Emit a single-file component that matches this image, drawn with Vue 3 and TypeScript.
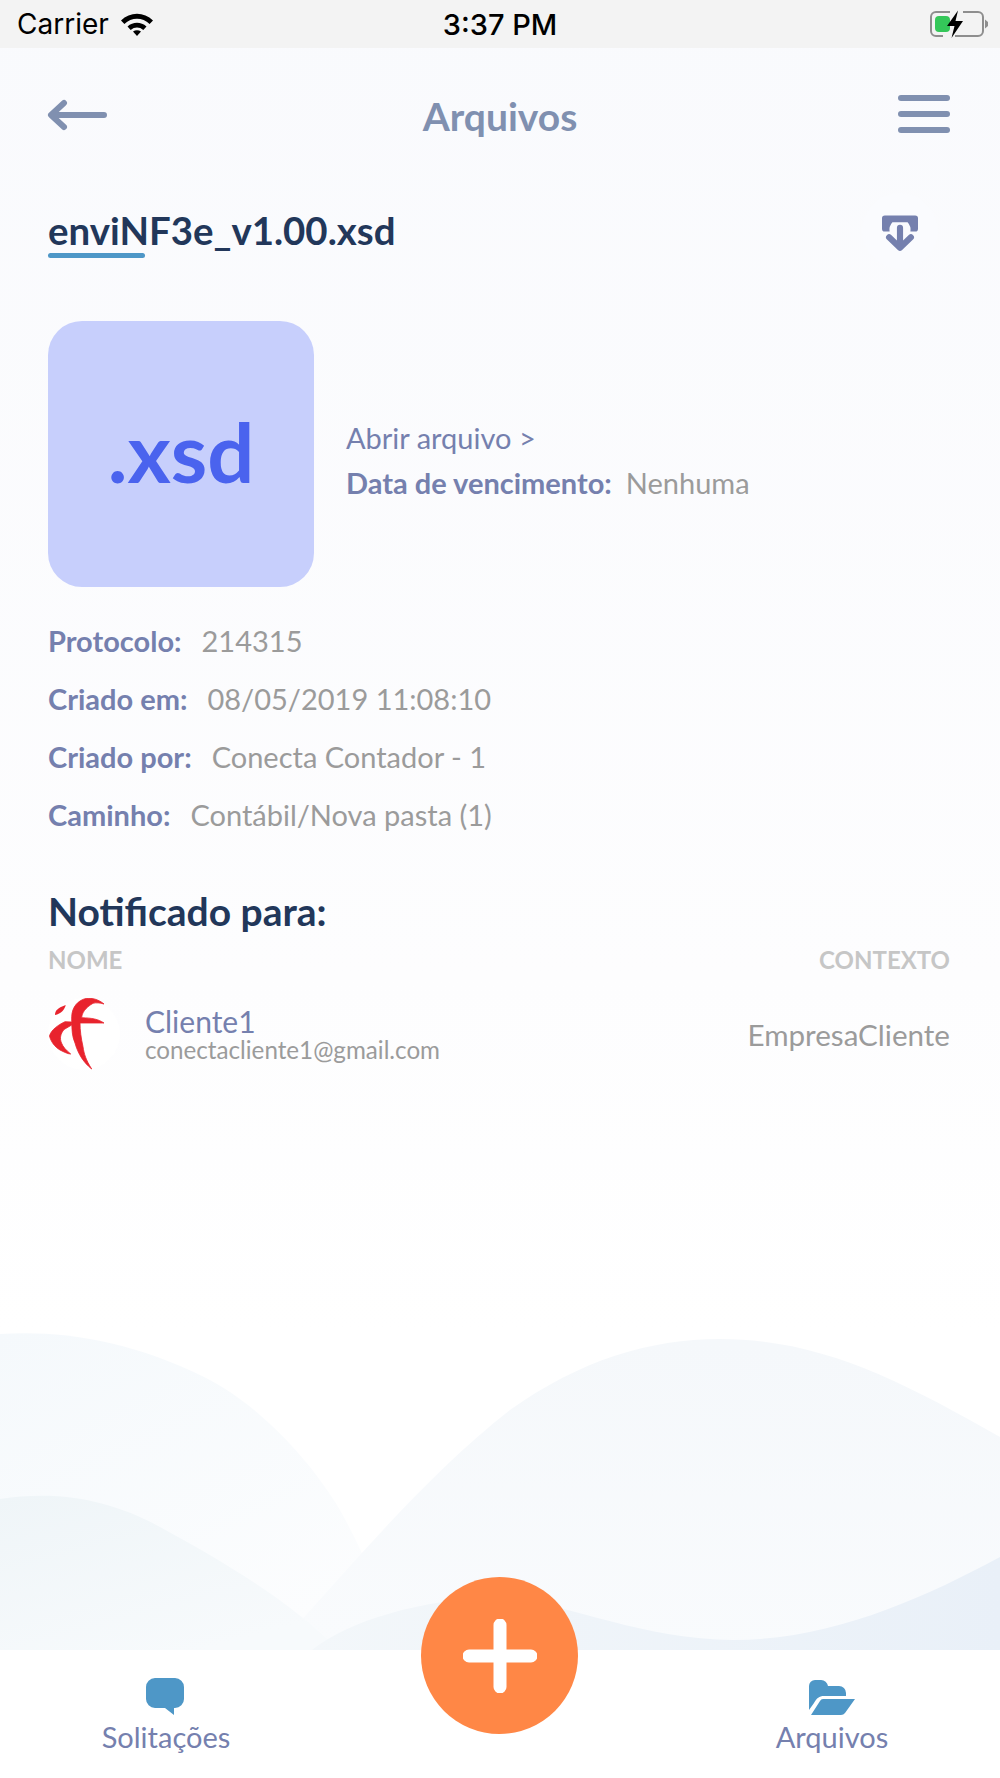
<template>
  <div class="screen">
    <svg class="waves" viewBox="0 0 1000 320" preserveAspectRatio="none">
      <defs>
        <linearGradient id="waveA" x1="0" y1="0" x2="0.6" y2="1">
          <stop offset="0" stop-color="#f5f9fc" />
          <stop offset="1" stop-color="#fcfdfe" />
        </linearGradient>
        <linearGradient id="waveB" x1="0" y1="0" x2="0.6" y2="1">
          <stop offset="0" stop-color="#eff5f8" />
          <stop offset="1" stop-color="#f7fafc" />
        </linearGradient>
        <linearGradient id="waveC" x1="0.5" y1="0" x2="0.4" y2="1">
          <stop offset="0" stop-color="#f5f8fb" />
          <stop offset="1" stop-color="#f9fbfd" />
        </linearGradient>
        <linearGradient id="waveD" x1="0" y1="0" x2="1" y2="0">
          <stop offset="0" stop-color="#f3f7fa" />
          <stop offset="1" stop-color="#e9f0f8" />
        </linearGradient>
      </defs>
      <path d="M0 4C60 0 130 10 204 47C260 75 310 130 340 180C365 225 385 275 402 320H0Z" fill="url(#waveA)" />
      <path d="M274 320C340 250 420 150 510 80C580 30 650 9 720 9C820 9 900 50 1000 107V320Z" fill="url(#waveC)" />
      <path d="M0 169C60 160 110 170 160 197C220 230 290 270 338 320H0Z" fill="url(#waveB)" />
      <path d="M312 320C350 290 420 270 497 267C560 270 640 310 733 310C830 310 920 270 1000 227V320Z" fill="url(#waveD)" />
    </svg>

    <div class="status-bar">
      <div class="status-left">
        <span>Carrier</span>
        <svg width="36" height="26" viewBox="0 0 36 26">
          <path d="M2 9.500C11 .5 25 .5 34 9.500L30.600 13C23.500 6 12.500 6 5.400 13Z" fill="#000" />
          <path d="M8.500 15.500C14 10.500 22 10.500 27.500 15.500L24.300 19C20.500 15.700 15.500 15.700 11.700 19Z" fill="#000" />
          <path d="M14 20.500C16.500 18.800 19.500 18.800 22 20.500L18 25Z" fill="#000" />
        </svg>
      </div>
      <span class="clock">3:37 PM</span>
      <svg class="battery" width="60" height="30" viewBox="0 0 60 30">
        <path d="M22 3H8a5 5 0 0 0-5 5v14a5 5 0 0 0 5 5h7M35 3h15a5 5 0 0 1 5 5v14a5 5 0 0 1-5 5H27" fill="none" stroke="#8e8e8e" stroke-width="2" />
        <rect x="7" y="7" width="15" height="16" rx="4" fill="#34c759" />
        <path d="M57 10.500l3 2.500v4l-3 2.500Z" fill="#8e8e8e" />
        <path d="M30 1.500L19 17h7.500L23.500 29L35 12h-7.500Z" fill="#000" />
      </svg>
    </div>

    <header class="top-bar">
      <svg class="back" width="60" height="32" viewBox="0 0 60 32">
        <path d="M57 16H5M17 4L4 16L17 28" fill="none" stroke="#8090b0" stroke-width="6" stroke-linecap="round" stroke-linejoin="round" />
      </svg>
      <h1>Arquivos</h1>
      <div class="menu"><i></i><i></i><i></i></div>
    </header>

    <main class="content">
      <div class="file-title">
        <h2>enviNF3e_v1.00.xsd</h2>
        <div class="download">
          <svg width="36" height="37" viewBox="0 0 38 38">
            <path d="M3 0H35a3 3 0 0 1 3 3V14a3 3 0 0 1-3 3H30a12 12 0 0 0-3-10H11a12 12 0 0 0-3 10H3a3 3 0 0 1-3-3V3a3 3 0 0 1 3-3Z" fill="#7580ae" />
            <path d="M19 13V31M7.500 23L19 34L30.500 23" fill="none" stroke="#7580ae" stroke-width="6.500" stroke-linecap="round" stroke-linejoin="round" />
          </svg>
        </div>
      </div>

      <section class="file-summary">
        <div class="file-thumb">.xsd</div>
        <div class="file-links">
          <a class="open-link">Abrir arquivo &gt;</a>
          <p class="info narrow"><b>Data de vencimento:</b><span>Nenhuma</span></p>
        </div>
      </section>

      <section class="details">
        <p v-for="row in details" :key="row.label" class="info">
          <b>{{ row.label }}</b><span>{{ row.value }}</span>
        </p>
      </section>

      <h3>Notificado para:</h3>
      <div class="table-head"><span>NOME</span><span>CONTEXTO</span></div>
      <div class="person">
        <div class="avatar">
          <svg width="72" height="72" viewBox="0 0 72 72">
            <path d="M7 17C7 13 9 10 17.700 7C17 11 13 16 7 17Z" fill="#e8232d" />
            <path d="M56 6C50 1 44 0 38.700 .3C30 2 24 9 23.700 18.700L23.700 23.700C24 32 24 38 27 45C30 56 36 65 43.700 71C38 62 36 56 35 48.700C33 40 32 32 32 25L56 25C50 21 44 20 33.700 19.700C34 15 37 10 45 5.300C48 4.500 52 4.800 56 6Z" fill="#e8232d" stroke="#e8232d" stroke-width="0.800" stroke-linejoin="round" />
            <path d="M17 23.700C10 27 3 32 1.500 38C3 44 7 49 12 52C16 54 20 56 22.700 56C18 52 15 49 13.500 45C11.500 40 12.500 36 16 31.500L23.700 27V24Z" fill="#e8232d" stroke="#e8232d" stroke-width="0.800" stroke-linejoin="round" />
          </svg>
        </div>
        <div class="person-text">
          <span class="person-name">Cliente1</span>
          <span class="person-mail">conectacliente1@gmail.com</span>
        </div>
        <span class="person-context">EmpresaCliente</span>
      </div>
    </main>

    <footer class="tab-bar">
      <div class="tab">
        <svg class="bubble" width="38" height="38" viewBox="0 0 38 38">
          <path d="M9 0H29a9 9 0 0 1 9 9V21a9 9 0 0 1-9 9H28V37L19 30H9a9 9 0 0 1-9-9V9a9 9 0 0 1 9-9Z" fill="#4e97c7" />
        </svg>
        <span>Solitações</span>
      </div>
      <button class="fab" type="button" aria-label="Adicionar">
        <svg width="74" height="74" viewBox="0 0 74 74">
          <path d="M37 6V68M6 37H68" stroke="#fff" stroke-width="13" stroke-linecap="round" />
        </svg>
      </button>
      <div class="tab">
        <svg width="46" height="36" viewBox="0 0 46 36">
          <path d="M0 6a6 6 0 0 1 6-6H12a7 7 0 0 1 7 6H30a7 7 0 0 1 7 7V16H15C10 16 8 18 5 23L0 30Z" fill="#4e97c7" />
          <path d="M14 19H46L36 33a5 5 0 0 1-4 2H2L11 21a4 4 0 0 1 3-2Z" fill="#4e97c7" />
        </svg>
        <span>Arquivos</span>
      </div>
    </footer>
  </div>
</template>

<script setup lang="ts">
const details = [
  { label: 'Protocolo:', value: '214315' },
  { label: 'Criado em:', value: '08/05/2019 11:08:10' },
  { label: 'Criado por:', value: 'Conecta Contador - 1' },
  { label: 'Caminho:', value: 'Contábil/Nova pasta (1)' },
];
</script>

<style scoped>
.screen {
  position: relative;
  width: 1000px;
  height: 1778px;
  display: flex;
  flex-direction: column;
  overflow: hidden;
  font-family: Lato, "Liberation Sans", sans-serif;
  background: linear-gradient(#f9fafd 0%, #fdfdfe 55%, #ffffff 75%);
}

.waves {
  position: absolute;
  left: 0;
  top: 1330px;
  width: 1000px;
  height: 320px;
}

.status-bar {
  position: relative;
  height: 48px;
  flex: none;
  background: #f3f3f3;
  display: flex;
  align-items: center;
  justify-content: space-between;
  padding: 0 12px 0 17px;
  font-family: Inter, "Liberation Sans", sans-serif;
  font-size: 28px;
  color: #000;
}

.status-left {
  display: flex;
  align-items: center;
  gap: 10px;
}

.clock {
  position: absolute;
  left: 0;
  right: 0;
  text-align: center;
  font-weight: 500;
  font-size: 29px;
}

.top-bar {
  position: relative;
  flex: none;
  height: 136px;
  display: flex;
  align-items: center;
  justify-content: space-between;
  padding: 0 50px 0 47px;
}

.top-bar h1 {
  position: absolute;
  left: 0;
  right: 0;
  margin: 0;
  text-align: center;
  font-size: 39px;
  font-weight: 700;
  color: #8090b0;
}

.back {
  margin-top: -3px;
}

.menu {
  display: flex;
  flex-direction: column;
  gap: 10px;
  margin-top: -4px;
}

.menu i {
  display: block;
  width: 52px;
  height: 6px;
  border-radius: 3px;
  background: #8090b0;
}

.content {
  position: relative;
  flex: 1;
  padding: 22px 50px 0 48px;
}

.file-title {
  display: flex;
  align-items: center;
  justify-content: space-between;
  height: 50px;
  padding-right: 12px;
}

.file-title h2 {
  position: relative;
  margin: -2px 0 0;
  font-size: 38.400px;
  line-height: 46px;
  font-weight: 700;
  color: #22375a;
}

.file-title h2::after {
  content: "";
  position: absolute;
  left: 0;
  bottom: -5px;
  width: 97px;
  height: 5px;
  border-radius: 3px;
  background: #4e97c7;
}

.download {
  width: 76px;
  height: 76px;
  border-radius: 50%;
  background: #fafbfe;
  display: flex;
  align-items: center;
  justify-content: center;
  padding-top: 5px;
  box-sizing: border-box;
}

.file-summary {
  display: flex;
  align-items: center;
  gap: 32px;
  margin-top: 65px;
}

.file-thumb {
  width: 266px;
  height: 266px;
  border-radius: 34px;
  background: #c7cffc;
  color: #4a63ee;
  display: flex;
  align-items: center;
  justify-content: center;
  padding-bottom: 6px;
  box-sizing: border-box;
  font-size: 83px;
  font-weight: 700;
}

.file-links {
  display: flex;
  flex-direction: column;
  gap: 11px;
  margin-top: 12px;
}

.open-link {
  font-size: 29px;
  line-height: 34px;
  color: #7580ae;
}

.info {
  margin: 0;
  font-size: 29px;
  line-height: 34px;
  display: flex;
  gap: 20px;
  white-space: pre;
}

.info.narrow {
  gap: 14px;
}

.info b {
  font-weight: 700;
  color: #7580ae;
}

.info span {
  color: #9b9b9b;
}

.details {
  display: flex;
  flex-direction: column;
  gap: 24px;
  margin-top: 37px;
}

h3 {
  margin: 56px 0 0;
  font-size: 39px;
  line-height: 46px;
  font-weight: 700;
  color: #22375a;
}

.table-head {
  display: flex;
  justify-content: space-between;
  margin-top: 11px;
  font-size: 24px;
  line-height: 30px;
  font-weight: 700;
  color: #c6c6c6;
}

.person {
  display: flex;
  align-items: center;
  margin-top: 23px;
}

.avatar {
  width: 72px;
  height: 72px;
  border-radius: 50%;
  background: #fff;
  flex: none;
}

.avatar svg {
  display: block;
}

.person-text {
  display: flex;
  flex-direction: column;
  margin-left: 25px;
  flex: 1;
}

.person-name {
  font-size: 30px;
  line-height: 32px;
  color: #7580ae;
}

.person-mail {
  font-size: 24.200px;
  line-height: 26px;
  color: #9b9b9b;
}

.person-context {
  font-size: 29.600px;
  color: #9b9b9b;
}

.tab-bar {
  position: relative;
  flex: none;
  height: 128px;
  background: #fff;
  display: grid;
  grid-template-columns: 332px 1fr 332px;
}

.tab {
  display: flex;
  flex-direction: column;
  align-items: center;
  justify-content: flex-end;
  gap: 4px;
  padding-bottom: 24px;
  font-size: 29px;
  line-height: 34px;
  color: #7580ae;
}

.tab:last-child {
  grid-column: 3;
  padding-right: 4px;
}

.bubble {
  margin-right: 3px;
}

.fab {
  position: absolute;
  left: 421px;
  top: -73px;
  width: 157px;
  height: 157px;
  padding: 0;
  border: 0;
  border-radius: 50%;
  background: #ff8746;
  display: flex;
  align-items: center;
  justify-content: center;
}
</style>
